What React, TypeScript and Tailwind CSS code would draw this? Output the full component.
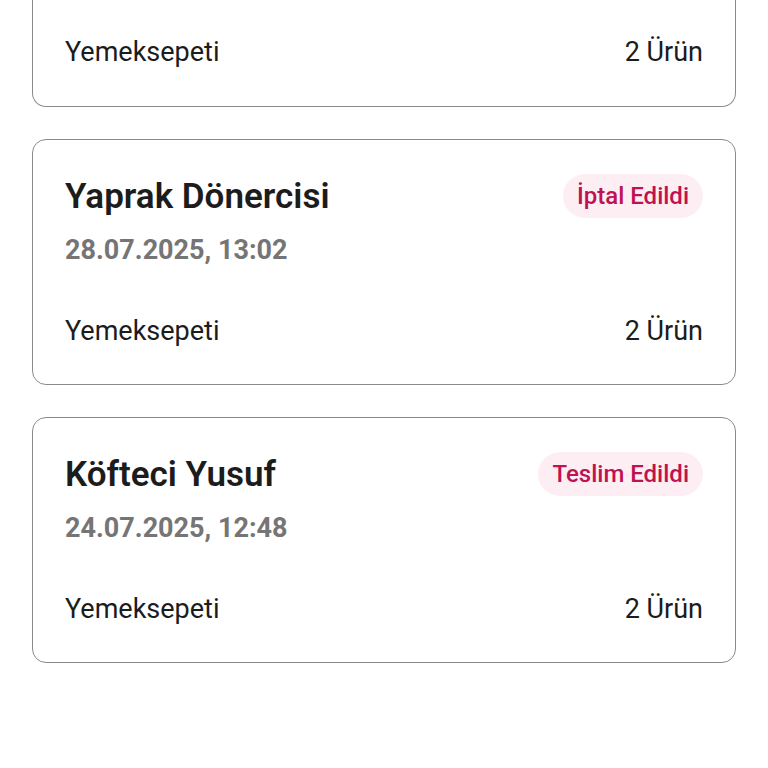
const orders = [
  { name: "Yaprak Dönercisi", date: "28.07.2025, 13:02", status: "İptal Edildi", platform: "Yemeksepeti", items: 2 },
  { name: "Köfteci Yusuf", date: "24.07.2025, 12:48", status: "Teslim Edildi", platform: "Yemeksepeti", items: 2 },
];

export default function App() {
  return (
    <div className="min-h-screen bg-white overflow-hidden font-['Roboto',sans-serif]">
      <div className="px-8 flex flex-col gap-[32px]">
        {/* previous order, scrolled past the top */}
        <div className="border border-t-0 border-[#8a8a8a] rounded-b-[14px] h-[107px] px-8 pt-[34px]">
          <div className="flex items-center justify-between text-[27px] text-[#1c1c1c] leading-9">
            <span>Yemeksepeti</span>
            <span>2 Ürün</span>
          </div>
        </div>
        {orders.map((o, i) => (
          <div key={i} className="border border-[#8a8a8a] rounded-[14px] h-[246px] px-8 pt-[34px]">
            {/* Header */}
            <div className="flex items-center justify-between h-11">
              <h2 className="text-[35px] font-semibold text-[#1c1c1c] leading-none">{o.name}</h2>
              <span className="bg-[#fdeef3] text-[#bf1250] text-[24px] font-medium rounded-full h-11 px-[14px] flex items-center">
                {o.status}
              </span>
            </div>
            <p className="mt-[14px] text-[27px] font-bold text-[#757575] leading-9">{o.date}</p>
            {/* Footer */}
            <div className="mt-[45px] flex items-center justify-between text-[27px] text-[#1c1c1c] leading-9">
              <span>{o.platform}</span>
              <span>{o.items} Ürün</span>
            </div>
          </div>
        ))}
      </div>
    </div>
  );
}
